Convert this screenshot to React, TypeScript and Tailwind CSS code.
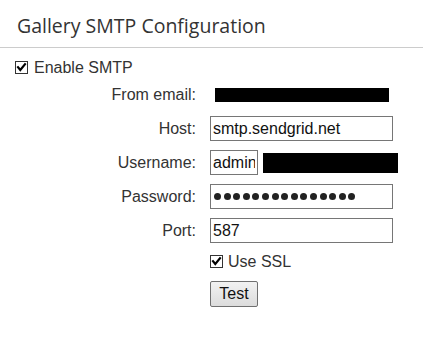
import React from "react";

const arial = { fontFamily: '"Liberation Sans", Arial, sans-serif' };

function Check() {
  return (
    <svg width="13" height="13" viewBox="0 0 13 13" className="shrink-0" aria-hidden>
      <rect x="0.5" y="0.5" width="12" height="12" fill="#fff" stroke="#333" />
      <path d="M3 6.2 L5.3 9 L10 3.2" fill="none" stroke="#000" strokeWidth="2.2" strokeLinecap="square" />
    </svg>
  );
}

function Row({ label, children }: { label: string; children: React.ReactNode }) {
  return (
    <div className="flex h-[25px] items-center">
      <div className="w-[197px] pr-[1px] text-right text-[16px] text-[#333]">{label}</div>
      <div className="ml-[13px] flex items-center">{children}</div>
    </div>
  );
}

const inputCls =
  "h-[25px] border border-[#767676] bg-white px-[2px] text-[16px] text-[#111] outline-none";

export default function App() {
  return (
    <div className="h-[343px] w-[423px] bg-white" style={arial}>
      <div className="h-[48px] border-b border-[#cccccc] pl-[17px] pt-[13px]">
        <h1
          className="text-[19.5px] leading-[26px] text-[#333]"
          style={{ fontFamily: '"Open Sans", "Noto Sans", sans-serif' }}
        >
          Gallery SMTP Configuration
        </h1>
      </div>

      <div className="flex h-[19px] items-center gap-[6px] pl-[15px] mt-[10px] text-[16px] text-[#333]">
        <Check />
        <span>Enable SMTP</span>
      </div>

      <div className="mt-[5px] flex flex-col gap-[9px]">
        <Row label="From email:">
          <div className="ml-[5px] h-[14px] w-[174px] bg-black" />
        </Row>
        <Row label="Host:">
          <input readOnly defaultValue="smtp.sendgrid.net" className={inputCls + " w-[183px]"} />
        </Row>
        <Row label="Username:">
          <input readOnly defaultValue="admin" className={inputCls + " w-[48px]"} />
          <div className="ml-[5px] h-[20px] w-[135px] bg-black" />
        </Row>
        <Row label="Password:">
          <div className={inputCls + " flex w-[183px] items-center gap-[2.6px] pl-[3px]"}>
            {Array.from({ length: 15 }).map((_, i) => (
              <span key={i} className="h-[7px] w-[7px] rounded-full bg-[#222]" />
            ))}
          </div>
        </Row>
        <Row label="Port:">
          <input readOnly defaultValue="587" className={inputCls + " w-[183px]"} />
        </Row>
      </div>

      <div className="ml-[210px] mt-[9px] flex h-[19px] items-center gap-[5px] text-[16px] text-[#333]">
        <Check />
        <span>Use SSL</span>
      </div>

      <button
        type="button"
        className="ml-[210px] mt-[10px] block h-[26px] w-[48px] rounded-[2px] border border-[#707070] bg-gradient-to-b from-[#f2f2f2] to-[#dcdcdc] text-[16px] text-[#111]"
      >
        Test
      </button>
    </div>
  );
}
